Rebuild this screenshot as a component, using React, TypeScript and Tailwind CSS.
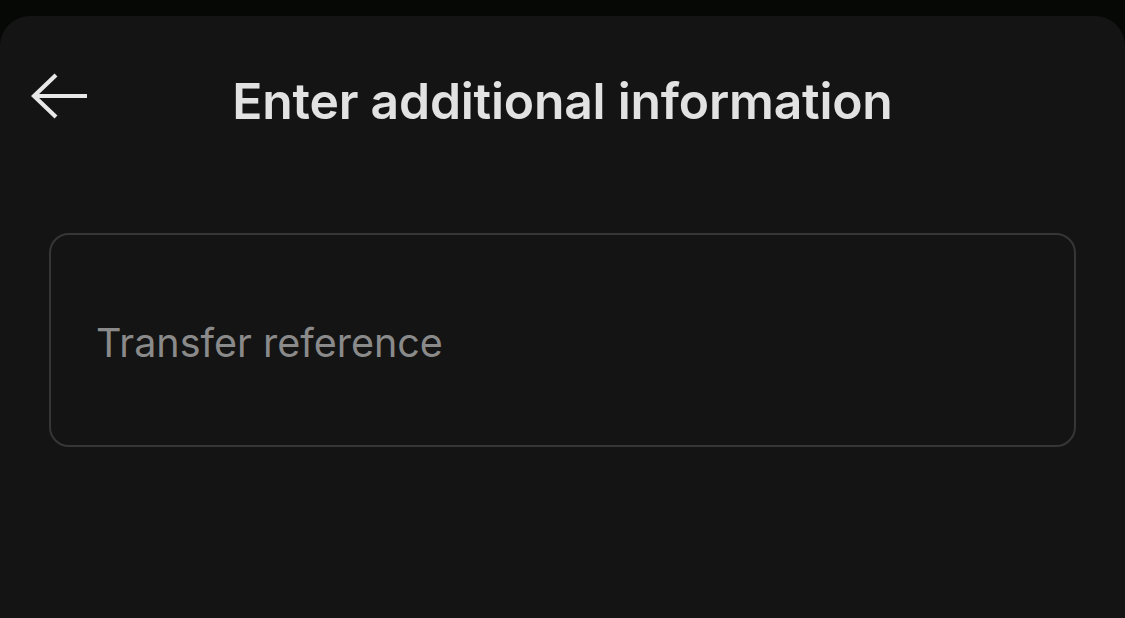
export default function App() {
  return (
    <div className="w-[1125px] h-[618px] bg-[#050805] pt-4 overflow-hidden" style={{ fontFamily: 'Inter, "Noto Sans", sans-serif' }}>
      <div className="h-full bg-[#141414] rounded-t-[30px] flex flex-col">
        {/* Header */}
        <div className="relative flex items-center justify-center h-[160px]">
          <button className="absolute left-[31px] top-[57px] w-[58px] h-[46px] flex items-center justify-center">
            <svg width="58" height="46" viewBox="0 0 58 46" fill="none" stroke="#e8e8e8" strokeWidth="4.2" strokeLinecap="butt">
              <path d="M5 23H56" />
              <path d="M25 2L3 23L25 44" />
            </svg>
          </button>
          <h1 className="text-[49.8px] font-semibold text-[#e2e2e2] tracking-[-0.2px] mt-[10px]">Enter additional information</h1>
        </div>

        {/* Input */}
        <div className="px-[49px] pt-[57px]">
          <div className="h-[214px] border-2 border-[#363636] rounded-[20px] flex items-center px-[45px]">
            <span className="text-[39.5px] text-[#8a8a8a] mt-[8px]">Transfer reference</span>
          </div>
        </div>
      </div>
    </div>
  )
}
